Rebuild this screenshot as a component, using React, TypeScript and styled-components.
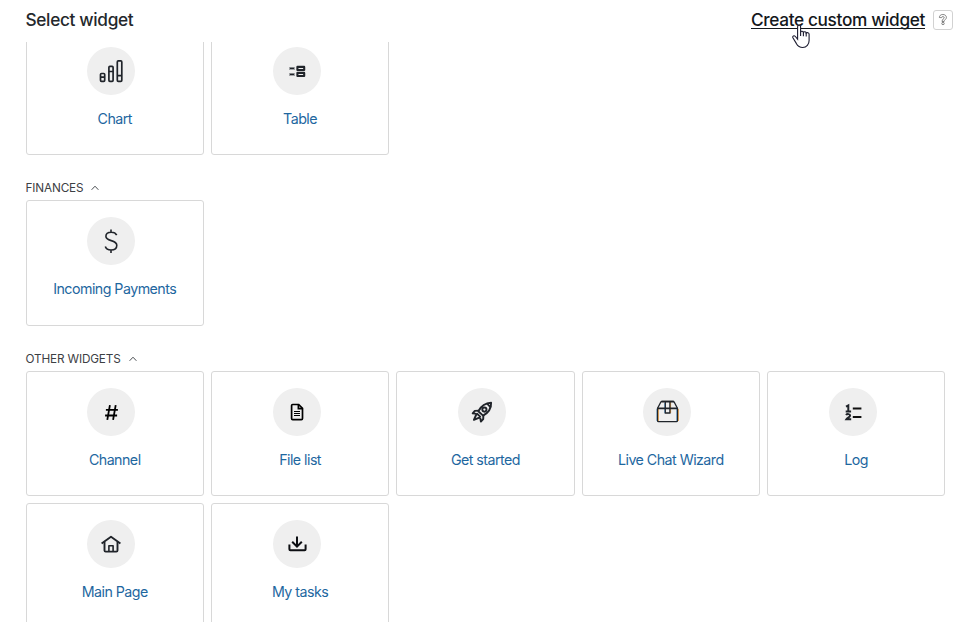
import React from "react";
import styled, { createGlobalStyle } from "styled-components";

const GlobalStyle = createGlobalStyle`
  * { box-sizing: border-box; }
  body { margin: 0; background: #fff; overflow: hidden; font-family: Inter, "Liberation Sans", sans-serif; }
`;

const Page = styled.div`
  width: 958px;
  height: 622px;
  overflow: hidden;
  display: flex;
  flex-direction: column;
`;

const Header = styled.header`
  flex: none;
  height: 42px;
  padding: 8px 5px 10px 25.5px;
  display: flex;
  align-items: center;
`;

const Title = styled.h1`
  margin: 0 auto 0 0;
  font-size: 17.25px;
  line-height: 24px;
  font-weight: 500;
  letter-spacing: -0.33px;
  color: #24282c;
`;

const CreateLink = styled.a`
  position: relative;
  font-size: 17.25px;
  line-height: 24px;
  font-weight: 500;
  letter-spacing: -0.36px;
  color: #14181c;
  text-decoration: underline;
  text-decoration-thickness: 1px;
  text-underline-offset: 2px;
  text-decoration-skip-ink: none;
`;

const Pointer = styled.svg`
  position: absolute;
  left: 39.5px;
  top: 16px;
`;

const Help = styled.button`
  width: 20px;
  height: 20px;
  margin-left: 8px;
  padding: 0;
  border: 1px solid #d2d2d2;
  border-radius: 3px;
  background: #fff;
  display: grid;
  place-items: center;
`;

const Content = styled.main`
  flex: 1;
  min-height: 0;
  overflow: hidden;
  padding-left: 25.6px;
`;

const Section = styled.section<{ $scrolled?: boolean }>`
  margin-top: ${(p) => (p.$scrolled ? "-12.4px" : "0")};
`;

const SectionTitle = styled.h2`
  margin: 0;
  height: 45.3px;
  padding-top: 24px;
  display: flex;
  align-items: flex-start;
  gap: 8px;
  font-size: 11.75px;
  line-height: 18px;
  font-weight: 400;
  letter-spacing: -0.16px;
  color: #3c4044;
  svg { margin-top: 6px; }
`;

const Grid = styled.div`
  display: grid;
  grid-template-columns: repeat(5, 178.25px);
  grid-auto-rows: 125.4px;
  gap: 7px 7.12px;
`;

const Card = styled.div`
  border: 1px solid #d8d8d8;
  border-radius: 3px;
  padding-top: 16px;
`;

const IconCircle = styled.div`
  width: 48px;
  height: 48px;
  margin-left: 60.7px;
  border-radius: 50%;
  background: #efefef;
  svg { display: block; }
`;

const Label = styled.div`
  margin-top: 14px;
  font-size: 14.25px;
  line-height: 20px;
  letter-spacing: -0.54px;
  text-align: center;
  white-space: nowrap;
  color: #1e679f;
`;

const ink = "#20242a";

const icons: Record<string, React.ReactNode> = {
  chart: (
    <g strokeWidth="1.7">
      <rect x="13.5" y="26.5" width="4.2" height="7.8" rx="1" />
      <rect x="21.9" y="19.4" width="4.2" height="14.9" rx="1" />
      <rect x="30.3" y="13.9" width="4.5" height="20.4" rx="1" />
      <path d="M13.5 30.2h4.2M21.9 24.5h4.2M30.3 28.6h4.5" />
    </g>
  ),
  table: (
    <g strokeWidth="2.1" strokeLinejoin="round">
      <path d="M16 21.4h6M16 27.4h6" stroke="#a2a4a7" strokeWidth="3" />
      <path d="M17 21.4h4M17 27.4h4" strokeWidth="1.3" />
      <rect x="24.4" y="19.9" width="6.8" height="3.1" />
      <rect x="24.4" y="25.9" width="6.8" height="3.1" />
    </g>
  ),
  dollar: (
    <path
      strokeWidth="1.6"
      d="M24 12.5v3M24 33v3M29.7 18.2c-.9-1.9-2.9-2.9-5.4-2.9-3.2 0-5.4 1.6-5.4 4 0 2.3 1.7 3.4 5.3 4.3 3.8 1 5.6 2.1 5.6 4.7 0 2.8-2.3 4.7-5.8 4.7-2.9 0-5-1.2-5.7-3.4"
    />
  ),
  hash: <path stroke="#000" strokeWidth="1.8" d="M22.9 17.2l-2.6 14.7M28.7 17.2l-2.6 14.7M18.9 21.8h12M18.1 27.5h12" />,
  file: (
    <g stroke="#000" strokeWidth="1.7">
      <path d="M18.6 17.6c0-.7.4-1.1 1.1-1.1h6l3.8 3.9v10.1c0 .7-.4 1.1-1.1 1.1h-8.7c-.7 0-1.1-.4-1.1-1.1z" />
      <path d="M25.4 16.7v3.9h4" />
      <path strokeWidth="1" d="M21 23.5h6M21 25.5h6M21 27.5h6" />
    </g>
  ),
  rocket: (
    <g strokeWidth="1.9" strokeLinejoin="round">
      <path d="M20.3 23.2c2.4-4.4 6.2-8.3 12.8-8.5.3 6.2-3.2 10.2-8 12.9z" />
      <path d="M28.8 15.4l3.9 3.9M20.6 22.6l-3.8.3-2.1 2.5 3.9.5M25.4 27.1l-.2 4-2.3 2.4-.7-3.8M18.5 26l-2.6 5.9 6-2.5M18.8 25.4l3.8 3.8" />
      <circle cx="26.4" cy="21.6" r="2.1" />
    </g>
  ),
  box: (
    <g strokeWidth="1.3">
      <path stroke="#5fa3d6" strokeWidth=".8" d="M13.9 21v12M21.6 15v10M33.7 21v12" />
      <path stroke="#f0a03c" strokeWidth="1" d="M15.3 21v12M27.6 14v11M35.3 21v12" />
      <path d="M14.5 20.5v12c0 .7.4 1.2 1.2 1.2h17.6c.8 0 1.2-.5 1.2-1.2v-12l-3.2-6.2c-.3-.6-.7-.9-1.3-.9H19c-.6 0-1 .3-1.3.9z" />
      <path strokeWidth="1.7" d="M14.5 20.4h20M18.5 13.7h12.4" />
      <path d="M22.3 14v11h4.6V14" />
    </g>
  ),
  log: (
    <g strokeWidth="2">
      <path d="M17 18.7l2.3-1.2v5.8M16.7 23.4h5.4" />
      <path d="M17 27c1-1.3 4.1-1.2 4.1.5 0 1.5-2.7 2.2-3.7 3.8h4.8" />
      <path stroke="#111" strokeWidth="1.9" d="M23.8 20.5h8.6M23.8 29h8.6" />
    </g>
  ),
  home: (
    <g strokeWidth="1.9" strokeLinejoin="round">
      <path d="M14.6 23.6l9.4-6.9 9.4 6.9" />
      <path d="M17.5 22v8.4c0 .8.4 1.2 1.2 1.2h10.6c.8 0 1.2-.4 1.2-1.2V22" />
      <path strokeWidth="1.6" d="M21.9 31.5v-5.7h4.2v5.7" />
    </g>
  ),
  download: (
    <g stroke="#0c0e12" strokeWidth="2">
      <path d="M24 16.4v9.8M19.2 21.8l4.8 4.8 4.8-4.8" />
      <path d="M16.4 24.4v4.9c0 .7.4 1 1 1h14.2c.6 0 1-.3 1-1v-4.9" />
    </g>
  ),
};

interface Item {
  label: string;
  icon: string;
}

const WidgetCard = ({ label, icon }: Item) => (
  <Card>
    <IconCircle>
      <svg width="48" height="48" viewBox="0 0 48 48" fill="none" stroke={ink}>
        {icons[icon]}
      </svg>
    </IconCircle>
    <Label>{label}</Label>
  </Card>
);

const sections: { title?: string; items: Item[] }[] = [
  { items: [{ label: "Chart", icon: "chart" }, { label: "Table", icon: "table" }] },
  { title: "FINANCES", items: [{ label: "Incoming Payments", icon: "dollar" }] },
  {
    title: "OTHER WIDGETS",
    items: [
      { label: "Channel", icon: "hash" },
      { label: "File list", icon: "file" },
      { label: "Get started", icon: "rocket" },
      { label: "Live Chat Wizard", icon: "box" },
      { label: "Log", icon: "log" },
      { label: "Main Page", icon: "home" },
      { label: "My tasks", icon: "download" },
    ],
  },
];

export default function App() {
  return (
    <Page>
      <GlobalStyle />
      <Header>
        <Title>Select widget</Title>
        <CreateLink>
          Create custom widget
          <Pointer width="22" height="26" viewBox="0 0 22 26" fill="#fff" stroke="#1c1c30" strokeWidth="1.1">
            <path d="M6.6 15.2V2.7c0-2 3-2 3 0v5.2c.5-1.1 2.6-.9 2.8.5.6-1 2.6-.8 2.8.7.8-.8 2.9-.4 2.9 1.2v6.2c0 3.9-2.5 7-6.4 7-3.2 0-5-1.6-6.4-4.1l-3.4-5.7c-.8-1.6 1.2-2.6 2.5-1.2z" />
            <path d="M9.6 7.9v4M12.4 8.4v3.9M15.2 9.1v3.5" fill="none" />
          </Pointer>
        </CreateLink>
        <Help aria-label="Help">
          <svg width="12" height="14" viewBox="0 0 12 14" fill="#fff" stroke="#666" strokeWidth=".8">
            <path d="M2.4 4.5C2.3 2.7 3.7 1.5 5.8 1.5s3.6 1.2 3.6 3c0 1.9-2.3 2.2-2.3 4H5c0-2.5 2.2-2.6 2.2-3.9 0-.6-.5-1-1.3-1-.9 0-1.3.4-1.4 1.1z" />
            <circle cx="6" cy="10.5" r="1.2" />
          </svg>
        </Help>
      </Header>
      <Content>
        {sections.map((s, i) => (
          <Section key={i} $scrolled={i === 0}>
            {s.title && (
              <SectionTitle>
                {s.title}
                <svg width="8" height="6" viewBox="0 0 8 6" fill="none" stroke="#4a4e52">
                  <path d="M.6 4.8L4 1.2l3.4 3.6" />
                </svg>
              </SectionTitle>
            )}
            <Grid>
              {s.items.map((item) => (
                <WidgetCard key={item.label} {...item} />
              ))}
            </Grid>
          </Section>
        ))}
      </Content>
    </Page>
  );
}
